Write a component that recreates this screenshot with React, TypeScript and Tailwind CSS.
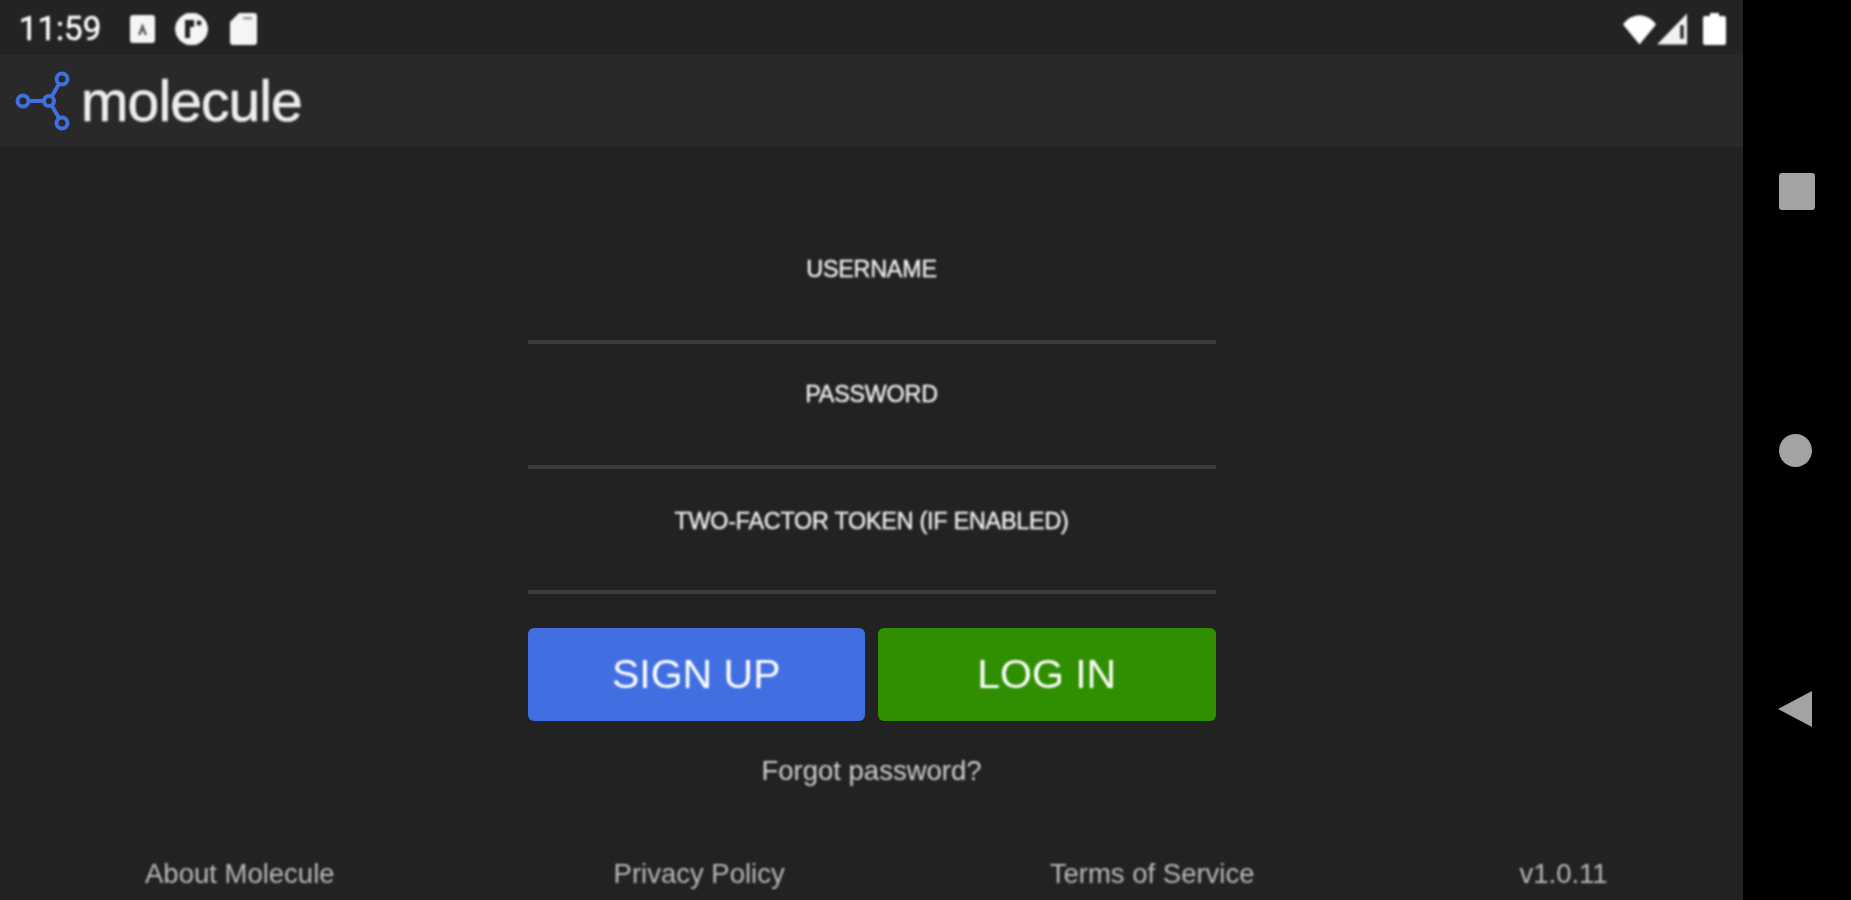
import React from "react";

const font = { fontFamily: '"Liberation Sans", Arial, sans-serif' };

function Logo() {
  return (
    <svg width="60" height="62" viewBox="0 0 60 62" fill="none" stroke="#3f6fe0" strokeWidth="4" className="mb-[3px] blur-[0.5px]">
      <circle cx="9" cy="32" r="5.5" />
      <circle cx="35" cy="32" r="5" />
      <circle cx="48" cy="10" r="5.5" />
      <circle cx="48" cy="54" r="5.5" />
      <path d="M15 32H30M38 27 45 15M38 37 45 49" />
    </svg>
  );
}

function Field({ label, shift }: { label: string; shift?: boolean }) {
  return (
    <div className="flex h-[89px] flex-col items-center border-b-[4px] border-[#3c3c3c]">
      <div className={(shift ? "pt-[3px] " : "pt-[1px] ") + "text-[23.3px] leading-[26px] tracking-[-0.2px] text-[#f0f0f0] blur-[0.8px] [-webkit-text-stroke:0.4px_#f0f0f0]"}>{label}</div>
    </div>
  );
}

function StatusBar() {
  return (
    <div className="flex h-[55px] items-center bg-[#232323] pl-[19px] pr-[17px] pt-[2px]">
      <span className="w-[111px] text-[33px] leading-[53px] text-white blur-[0.8px] [-webkit-text-stroke:0.5px_#fff]" style={{ fontFamily: 'Roboto, sans-serif' }}>11:59</span>
      <svg width="25" height="30" viewBox="0 0 25 30" className="blur-[0.8px]">
        <rect x="0" y="1" width="25" height="28" rx="3" fill="#f5f5f5" />
        <path d="M12.5 9 8 21h2.5l2-5 2 5H17Z" fill="#555" />
      </svg>
      <svg width="37" height="32" viewBox="0 0 37 32" className="ml-[18px] blur-[0.8px]">
        <circle cx="18.5" cy="16" r="16" fill="#f5f5f5" stroke="#f5f5f5" />
        <rect x="12" y="7" width="5" height="18" fill="#222" />
        <path d="M17 7h4v7h-4Z" fill="#222" />
        <circle cx="26" cy="10" r="2.5" fill="#222" />
      </svg>
      <svg width="27" height="32" viewBox="0 0 27 32" className="ml-[20px] blur-[0.8px]">
        <path d="M9 0h15a3 3 0 0 1 3 3v26a3 3 0 0 1-3 3H3a3 3 0 0 1-3-3V9Z" fill="#f5f5f5" />
        <rect x="13" y="4" width="9" height="2.5" fill="#999" />
      </svg>
      <div className="flex-1" />
      <svg width="33" height="34" viewBox="0 0 36 36" className="blur-[0.8px]">
        <path d="M18 35 0 13C4 7 11 3 18 3s14 4 18 10Z" fill="#fff" />
      </svg>
      <svg width="31" height="32" viewBox="0 0 32 32" className="ml-[1px] blur-[0.8px]">
        <path d="M31 0v32H0Z" fill="#f2f2f2" />
        <rect x="24" y="12" width="3.5" height="14" fill="#222" />
      </svg>
      <svg width="23" height="32" viewBox="0 0 23 32" className="ml-[15px] blur-[0.8px]">
        <path d="M7 0h9v3h5a2 2 0 0 1 2 2v25a2 2 0 0 1-2 2H2a2 2 0 0 1-2-2V5a2 2 0 0 1 2-2h5Z" fill="#fff" />
      </svg>
    </div>
  );
}

export default function App() {
  return (
    <div className="flex h-[900px] w-[1851px] overflow-hidden bg-black" style={font}>
      <div className="flex w-[1743px] flex-col bg-[#222222]">
        <StatusBar />
        <header className="flex h-[92px] items-center bg-[#292929] pl-[14px]">
          <Logo />
          <span className="ml-[7px] text-[57px] leading-[60px] tracking-[-0.9px] text-[#eeeeee] blur-[0.8px] [-webkit-text-stroke:0.6px_#eeeeee]">molecule</span>
        </header>
        <main className="flex flex-1 flex-col">
          <div className="mx-auto flex w-[688px] flex-col gap-[36px] pt-[108px]">
            <Field label="USERNAME" />
            <Field label="PASSWORD" />
            <Field label="TWO-FACTOR TOKEN (IF ENABLED)" shift />
          </div>
          <div className="mx-auto mt-[34px] flex w-[688px] gap-[13px]">
            <button className="h-[93px] flex-1 rounded-[6px] bg-[#416fe2] text-[41px] text-white">
              <span className="block blur-[0.8px]">SIGN UP</span>
            </button>
            <button className="h-[93px] flex-1 rounded-[6px] bg-[#2f8f00] text-[41px] text-white">
              <span className="block blur-[0.8px]">LOG IN</span>
            </button>
          </div>
          <div className="mt-[34px] text-center text-[27.5px] leading-[32px] text-[#d0d0d0] blur-[0.8px]">Forgot password?</div>
          <footer className="mt-auto flex gap-[265px] pb-[10px] pl-[145px] text-[27.5px] leading-[32px] text-[#bbbbbb] blur-[0.8px]">
            <span className="mr-[14px]">About Molecule</span>
            <span>Privacy Policy</span>
            <span>Terms of Service</span>
            <span>v1.0.11</span>
          </footer>
        </main>
      </div>
      <nav className="flex flex-1 flex-col items-center pt-[173px]">
        <div className="mr-[1px] h-[37px] w-[36px] rounded-[3px] bg-[#a3a3a3] blur-[0.5px]" />
        <div className="mr-[3px] mt-[224px] h-[33px] w-[33px] rounded-full bg-[#a3a3a3] blur-[0.5px]" />
        <svg width="36" height="38" viewBox="0 0 36 38" className="mr-[4px] mt-[223px] blur-[0.5px]">
          <path d="M35 1v36L1 19Z" fill="#a3a3a3" />
        </svg>
      </nav>
    </div>
  );
}
